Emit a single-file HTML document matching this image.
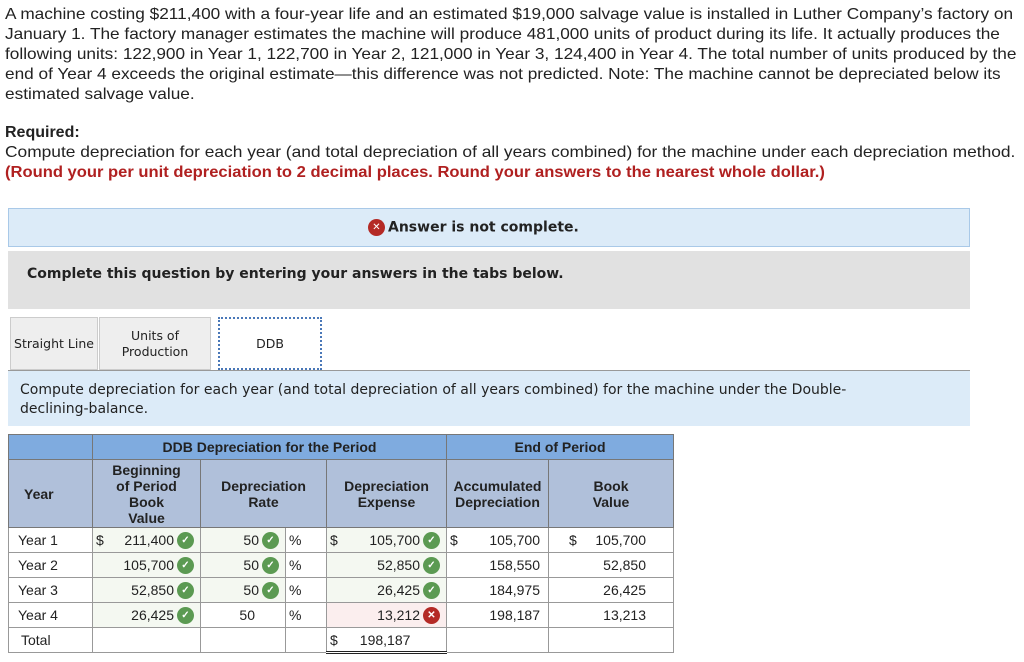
<!DOCTYPE html>
<html><head><meta charset="utf-8"><style>
body{margin:0;width:1024px;height:662px;background:#fff;font-family:"Liberation Sans",sans-serif;color:#222;position:relative;overflow:hidden}
.p{position:absolute;left:5px;font-size:16px;line-height:20px;white-space:nowrap;transform-origin:0 0;transform:scaleX(1.077)}
.ab{position:absolute;left:8px;top:208px;width:960px;height:37px;background:#dcebf8;border:1px solid #a9c9e8}
.ab span{position:absolute;left:381px;top:10px;font-weight:bold;font-family:"DejaVu Sans","Liberation Sans",sans-serif;font-size:14px}
.gray{position:absolute;left:8px;top:251px;width:962px;height:58px;background:#e1e1e1}
.gray span{position:absolute;left:19px;top:15px;font-weight:bold;font-family:"DejaVu Sans",sans-serif;font-size:14px}
.tab{position:absolute;top:317px;height:53px;background:#eee;border:1px solid #ccc;font-family:"DejaVu Sans",sans-serif;font-size:12.5px;display:flex;align-items:center;justify-content:center;text-align:center;line-height:16px;box-sizing:border-box;white-space:nowrap}
.inst{position:absolute;left:8px;top:370px;width:962px;height:56px;background:#dcebf8;border-top:1px solid #999;box-sizing:border-box}
.inst span{position:absolute;left:12px;top:10px;font-family:"DejaVu Sans",sans-serif;font-size:14px;line-height:19px}
table{position:absolute;left:8px;top:434px;border-collapse:collapse;font-size:14px;font-family:"Liberation Sans",sans-serif;table-layout:fixed}
td{border:1px solid #999;padding:0;height:25px;box-sizing:border-box;white-space:nowrap;vertical-align:middle;line-height:18px}
.h1 td{background:#7fabdf;font-weight:bold;text-align:center;height:25px}
.h2 td{background:#b0c0da;font-weight:bold;text-align:center;height:68px;line-height:16px;white-space:normal}
.h1 td,.h2 td{border-color:#777}
.g{background:#f4f8f1}
.r{text-align:right;padding-right:6px}
.ok,.x{display:inline-block;width:17px;height:17px;border-radius:50%;vertical-align:middle;margin-left:3px;margin-top:-2px;color:#fff;text-align:center;font-size:10px;line-height:17px;font-weight:bold;font-style:normal}
.ok{background:#5b9a52}.x{background:#b42a26}
.d{float:left;padding-left:3px}
</style></head><body>
<div class="p" style="top:5px">A machine costing $211,400 with a four-year life and an estimated $19,000 salvage value is installed in Luther Company’s factory on</div>
<div class="p" style="top:25px">January 1. The factory manager estimates the machine will produce 481,000 units of product during its life. It actually produces the</div>
<div class="p" style="top:45px">following units: 122,900 in Year 1, 122,700 in Year 2, 121,000 in Year 3, 124,400 in Year 4. The total number of units produced by the</div>
<div class="p" style="top:65px">end of Year 4 exceeds the original estimate—this difference was not predicted. Note: The machine cannot be depreciated below its</div>
<div class="p" style="top:85px">estimated salvage value.</div>
<div class="p" style="top:123px;font-weight:bold;transform:none">Required:</div>
<div class="p" style="top:143px;transform:scaleX(1.085)">Compute depreciation for each year (and total depreciation of all years combined) for the machine under each depreciation method.</div>
<div class="p" style="top:163px;font-weight:bold;color:#b02020;transform:scaleX(1.035)">(Round your per unit depreciation to 2 decimal places. Round your answers to the nearest whole dollar.)</div>
<div class="ab"><span><i class="x" style="margin:0 3px 0 -22px">✕</i>Answer is not complete.</span></div>
<div class="gray"><span>Complete this question by entering your answers in the tabs below.</span></div>
<div class="tab" style="left:10px;width:88px">Straight Line</div>
<div class="tab" style="left:99px;width:112px">Units of<br>Production</div>
<div class="tab" style="left:218px;width:104px;background:#fff;border:2px dotted #4a78b8">DDB</div>
<div class="inst"><span>Compute depreciation for each year (and total depreciation of all years combined) for the machine under the Double-<br>declining-balance.</span></div>
<table>
<colgroup><col style="width:84px"><col style="width:108px"><col style="width:85px"><col style="width:41px"><col style="width:120px"><col style="width:102px"><col style="width:125px"></colgroup>
<tr class="h1"><td></td><td colspan="4">DDB Depreciation for the Period</td><td colspan="2">End of Period</td></tr>
<tr class="h2"><td style="text-align:left;padding-left:15px">Year</td><td>Beginning<br>of Period<br>Book<br>Value</td><td colspan="2">Depreciation<br>Rate</td><td>Depreciation<br>Expense</td><td>Accumulated<br>Depreciation</td><td>Book<br>Value</td></tr>
<tr><td style="padding-left:9px">Year 1</td><td class="g r"><span class="d">$</span>211,400<i class="ok">✓</i></td><td class="g r">50<i class="ok">✓</i></td><td style="padding-left:3px">%</td><td class="g r"><span class="d">$</span>105,700<i class="ok">✓</i></td><td class="r" style="padding-right:8px"><span class="d">$</span>105,700</td><td class="r" style="padding-right:27px"><span class="d" style="padding-left:20px">$</span>105,700</td></tr>
<tr><td style="padding-left:9px">Year 2</td><td class="g r">105,700<i class="ok">✓</i></td><td class="g r">50<i class="ok">✓</i></td><td style="padding-left:3px">%</td><td class="g r">52,850<i class="ok">✓</i></td><td class="r" style="padding-right:8px">158,550</td><td class="r" style="padding-right:27px">52,850</td></tr>
<tr><td style="padding-left:9px">Year 3</td><td class="g r">52,850<i class="ok">✓</i></td><td class="g r">50<i class="ok">✓</i></td><td style="padding-left:3px">%</td><td class="g r">26,425<i class="ok">✓</i></td><td class="r" style="padding-right:8px">184,975</td><td class="r" style="padding-right:27px">26,425</td></tr>
<tr><td style="padding-left:9px">Year 4</td><td class="g r">26,425<i class="ok">✓</i></td><td class="r" style="padding-right:30px">50</td><td style="padding-left:3px">%</td><td class="r" style="background:#fbeeee">13,212<i class="x">✕</i></td><td class="r" style="padding-right:8px">198,187</td><td class="r" style="padding-right:27px">13,213</td></tr>
<tr><td style="padding-left:12px">Total</td><td></td><td></td><td></td><td style="border-bottom:3px double #222;padding-left:3px">$<span style="margin-left:22px">198,187</span></td><td></td><td></td></tr>
</table>
</body></html>
